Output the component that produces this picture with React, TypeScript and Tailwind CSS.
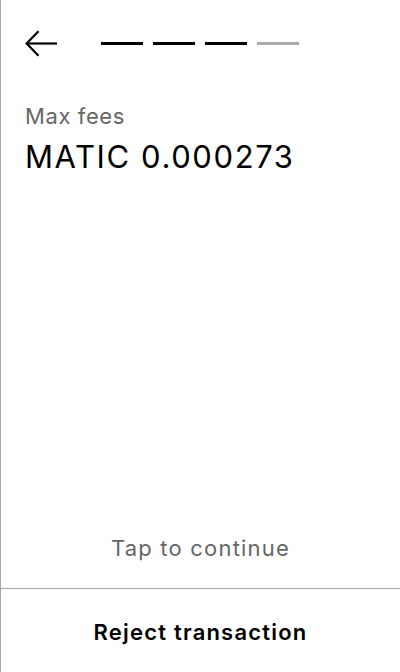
import React from "react";

export default function App() {
  return (
    <div
      className="w-[400px] h-[672px] bg-white border-l border-[#a8a8a8] flex flex-col"
      style={{ fontFamily: "Inter, 'Noto Sans', sans-serif" }}
    >
      <div className="flex items-center pl-6 pt-[30px] h-[57px]">
        <svg width="33" height="27" viewBox="0 0 33 27" fill="none" className="shrink-0">
          <path d="M32 13.5H2.5" stroke="black" strokeWidth="2.2" />
          <path d="M13.5 1.2L1.6 13.5L13.5 25.8" stroke="black" strokeWidth="2.2" />
        </svg>
        <div className="flex gap-[10px] ml-[43px]">
          <div className="w-[42px] h-[3.5px] bg-black" />
          <div className="w-[42px] h-[3.5px] bg-black" />
          <div className="w-[42px] h-[3.5px] bg-black" />
          <div className="w-[42px] h-[3.5px] bg-[#aaaaaa]" />
        </div>
      </div>
      <div className="px-6 pt-[45px]">
        <div className="text-[22px] leading-[28px] tracking-[0.6px] text-[#666666]">Max fees</div>
        <div className="text-[31px] leading-[36px] tracking-[1.6px] text-black mt-[9px]">MATIC 0.000273</div>
      </div>
      <div className="flex-1" />
      <div className="text-center text-[22px] leading-[28px] tracking-[1.2px] text-[#666666] mb-[26px]">
        Tap to continue
      </div>
      <div className="border-t border-[#a8a8a8] h-[84px] flex items-center justify-center pt-[2px]">
        <span className="text-[22px] leading-[28px] tracking-[1.2px] font-semibold text-black">Reject transaction</span>
      </div>
    </div>
  );
}
